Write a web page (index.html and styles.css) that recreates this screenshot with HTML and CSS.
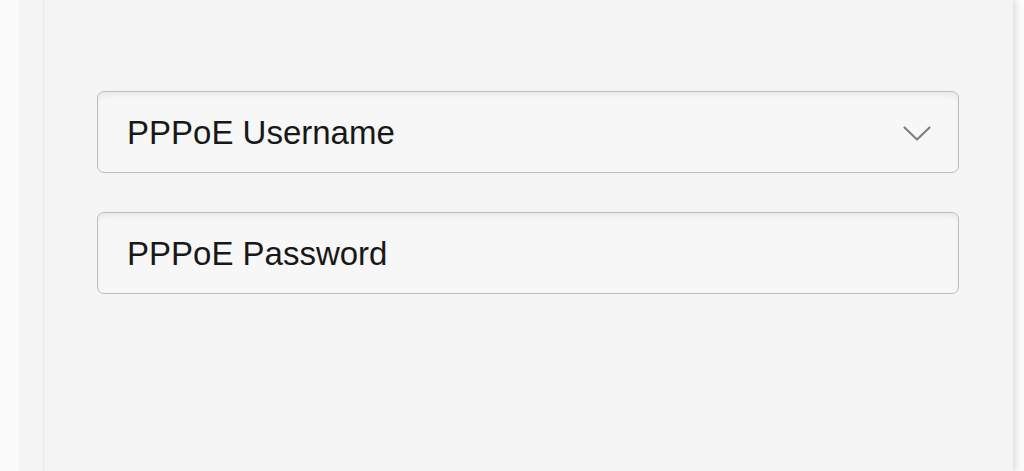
FILE: index.html
```html
<!DOCTYPE html>
<html>
<head>
<meta charset="utf-8">
<link rel="stylesheet" href="styles.css">
</head>
<body>
<div class="page">
  <div class="card">
    <div class="panel">
      <form class="fields">
        <div class="field select">
          <span class="label">PPPoE Username</span>
          <svg class="chev" width="28" height="16" viewBox="0 0 28 16"><path d="M1.5 1.5 L14 13.5 L26.5 1.5" fill="none" stroke="#808080" stroke-width="2.2" stroke-linecap="round" stroke-linejoin="round"/></svg>
        </div>
        <div class="field">
          <span class="label">PPPoE Password</span>
        </div>
      </form>
    </div>
  </div>
</div>
</body>
</html>
```
FILE: styles.css
```css
html, body {
  margin: 0;
  padding: 0;
  height: 100%;
}
body {
  background: #fbfbfb;
  font-family: "Liberation Sans", Arial, sans-serif;
  overflow: hidden;
}
.page {
  height: 471px;
  padding-left: 20px;
  padding-right: 11px;
  box-sizing: border-box;
  display: flex;
}
.card {
  flex: 1;
  background: #f4f4f4;
  padding-left: 23px;
  box-shadow: 3px 0 6px rgba(0, 0, 0, 0.12);
  display: flex;
}
.panel {
  flex: 1;
  border-left: 1px solid #ebebeb;
  background: #f4f4f4;
  padding: 91px 54px 0 53px;
}
.fields {
  display: flex;
  flex-direction: column;
  gap: 39px;
  margin: 0;
}
.field {
  height: 82px;
  box-sizing: border-box;
  border: 1px solid #bdbdbd;
  border-radius: 7px;
  background: #f7f7f7;
  box-shadow: inset 0 5px 7px -3px rgba(0, 0, 0, 0.08);
  display: flex;
  align-items: center;
  padding: 0 27px 0 29px;
}
.label {
  flex: 1;
  font-size: 33px;
  color: #181818;
  padding-top: 2px;
}
.chev {
  display: block;
  margin-top: 3px;
}
```
